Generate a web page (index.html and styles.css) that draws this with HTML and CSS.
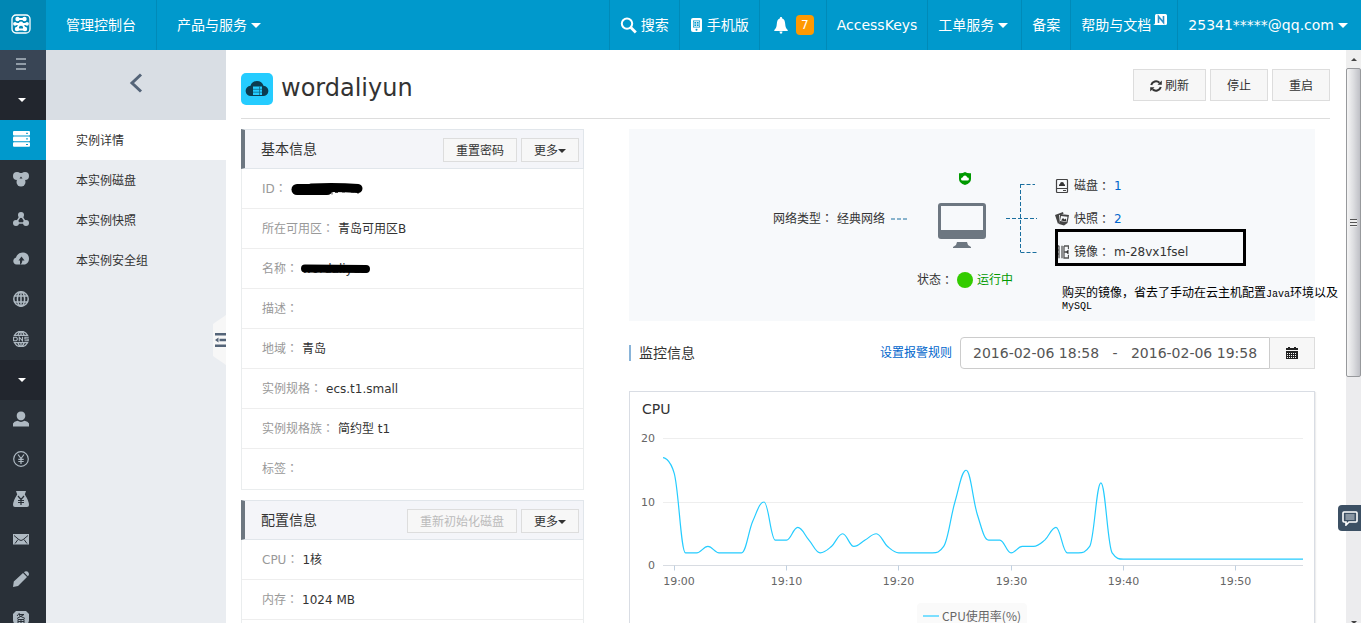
FILE: index.html
```html
<!DOCTYPE html>
<html lang="zh-CN">
<head>
<meta charset="utf-8">
<title>wordaliyun - 管理控制台</title>
<link rel="stylesheet" href="styles.css">
</head>
<body>
<header class="topbar">
  <a class="logo" href="#" aria-label="首页">
    <svg width="20" height="20" viewBox="0 0 20 20" fill="none" stroke="#fff"><rect x="1" y="1" width="18" height="18" rx="4" stroke-width="1.3"/><path d="M6.500 5h7M4 10h12M8.500 10l-2.500 5M11.500 10l2.500 5M6 15.500h8" stroke-width="2"/><g fill="#fff" stroke="none"><circle cx="6.500" cy="5" r="2.200"/><circle cx="13.500" cy="5" r="2.200"/><circle cx="4" cy="9.800" r="1.900"/><circle cx="10" cy="9.800" r="2.200"/><circle cx="16" cy="9.800" r="1.900"/><circle cx="6" cy="15" r="2.200"/><circle cx="14" cy="15" r="2.200"/></g></svg>
  </a>
  <a class="nav-item wide" href="#">管理控制台</a>
  <a class="nav-item wide divided" href="#">产品与服务<i class="caret"></i></a>
  <nav class="nav-right">
    <a class="nav-item divided" href="#"><svg width="17" height="17" viewBox="0 0 17 17" fill="none" stroke="#fff"><circle cx="7" cy="6.6" r="5.2" stroke-width="2"/><path d="M10.8 10.5l5 5" stroke-width="2.8"/></svg><span class="gap">搜索</span></a>
    <a class="nav-item divided" href="#"><svg width="13" height="16" viewBox="0 0 13 16"><rect x="1" y="1" width="11" height="14" rx="2" fill="#fff"/><path d="M3 3.500h7v7H3z" fill="#0099cc"/><path d="M4 4.500h5v5H4zM4 7h5M6.500 4.500v5" fill="none" stroke="#bfe5f2"/><circle cx="6.500" cy="12.800" r="1" fill="#0099cc"/></svg><span class="gap">手机版</span></a>
    <a class="nav-item divided bell" href="#" aria-label="消息"><svg width="14" height="17" viewBox="0 0 14 17" fill="#fff"><path d="M7 0c1 0 1.200.7 1.200 1.500C10.500 2.300 11 4.500 11.200 7c.2 3 .8 4.500 2.500 6v1H.3v-1C2 11.500 2.600 10 2.800 7 3 4.500 3.500 2.300 5.800 1.500 5.800.7 6 0 7 0zM5.500 14.500h3L8 16.500H6z"/></svg><span class="badge">7</span></a>
    <a class="nav-item divided" href="#">AccessKeys</a>
    <a class="nav-item divided" href="#">工单服务<i class="caret"></i></a>
    <a class="nav-item divided" href="#">备案</a>
    <a class="nav-item divided" href="#">帮助与文档<svg class="new" width="14" height="12" viewBox="0 0 14 12"><path d="M2 1.500Q2 0 3.500 0h9Q14 0 14 1.500v8q0 1.500-1.500 1.500H0q2-.5 2-2z" fill="#fff"/><path d="M5.500 9V2.500l5 6V2" fill="none" stroke="#2a8fc7" stroke-width="1.600"/></svg></a>
    <a class="nav-item divided" href="#">25341*****@qq.com<i class="caret"></i></a>
  </nav>
</header>
<div class="body">
  <nav class="rail">
    <button class="rail-toggle" aria-label="菜单"><svg width="10" height="12" viewBox="0 0 10 12" stroke="#aeb9c2" fill="none"><path d="M0 1h10M0 6h10M0 11h10" stroke-width="1.400"/></svg></button>
    <button class="rail-item dark" aria-label="产品"><i class="caret small"></i></button>
    <a class="rail-item active" href="#" aria-label="云服务器"><svg viewBox="0 0 17 16" width="17" height="16"><g fill="#fff"><rect width="17" height="4.600" rx="1"/><rect y="5.600" width="17" height="4.600" rx="1"/><rect y="11.200" width="17" height="4.600" rx="1"/></g><path d="M13 2.300h2M13 7.900h2M13 13.500h2" stroke="#0099cc"/></svg></a>
    <a class="rail-item" href="#" aria-label="数据库"><svg viewBox="0 0 16 16"><g fill="#aeb9c2"><circle cx="4" cy="5" r="4"/><circle cx="12" cy="5" r="4"/><circle cx="8" cy="11" r="4.500"/><path d="M4 2h8l-2 8H6z"/></g><path d="M8 5.500l1.500 2h-3z" fill="#293038"/></svg></a>
    <a class="rail-item" href="#" aria-label="负载均衡"><svg viewBox="0 0 16 16"><path d="M8 4L3 12h10z" fill="none" stroke="#aeb9c2" stroke-width="1.500"/><g fill="#aeb9c2"><circle cx="8" cy="4" r="3"/><circle cx="3" cy="12" r="3"/><circle cx="13" cy="12" r="3"/></g></svg></a>
    <a class="rail-item" href="#" aria-label="对象存储"><svg viewBox="0 0 16 16"><path d="M3.500 13.500A3.500 3.500 0 0 1 3 6.600C4 3 7 1.500 10 1.500c3.500 0 6 2.500 6 6s-2 6-5 6z" fill="#aeb9c2"/><path d="M8.500 5.500l3 4H9.300c0 2-.7 3-2.300 4.500V9.500H5.500z" fill="#293038"/></svg></a>
    <a class="rail-item" href="#" aria-label="CDN"><svg viewBox="0 0 16 16" fill="none" stroke="#aeb9c2" stroke-width="1.500"><circle cx="8" cy="8" r="7.200"/><ellipse cx="8" cy="8" rx="3.600" ry="7.200"/><path d="M8 1v14M1.500 5h13M1.500 11h13"/></svg></a>
    <a class="rail-item" href="#" aria-label="域名解析"><svg viewBox="0 0 16 16" fill="none" stroke="#aeb9c2" stroke-width="1.300"><path d="M1.500 4.300a7.300 7.300 0 0 1 13 0zM1.500 11.700a7.300 7.300 0 0 0 13 0zM8 1v3M8 12v3M5 4Q5.500 2 7 1M11 4Q10.500 2 9 1M5 12q.5 2 2 3M11 12q-.5 2-2 3"/><path stroke-width="1.100" d="M.6 6.200v3.600h2.600l1-1V7.200l-1-1zM6.300 10.300V6.200l3.200 3.600V5.700M15.800 6.200h-3.900V8h3.300v1.800h-3.700"/></svg></a>
    <button class="rail-item dark" aria-label="用户中心"><i class="caret small"></i></button>
    <a class="rail-item" href="#" aria-label="账号"><svg viewBox="0 0 16 16" fill="#aeb9c2"><path d="M8 .5c2.800 0 4.300 2 4.300 4.200C12.300 7 10.500 9.300 8 9.300S3.700 7 3.700 4.700C3.700 2.500 5.200.5 8 .5zM4.500 9.800Q8 12 11.500 9.800 15 10.500 16 12.500v3H0v-3Q1 10.500 4.500 9.800z"/></svg></a>
    <a class="rail-item" href="#" aria-label="费用"><svg viewBox="0 0 16 16" fill="none" stroke="#aeb9c2" stroke-width="1.200"><circle cx="8" cy="8" r="7.300"/><path d="M5 3.500l3 4 3-4M8 7.500v5.500M5.300 8.300h5.400M5.300 10.500h5.400"/></svg></a>
    <a class="rail-item" href="#" aria-label="续费"><svg viewBox="0 0 16 16"><path d="M3 0h10L11.800 3.500Q16 10 16 14q0 2-2 2H2q-2 0-2-2Q0 10 4.200 3.500z" fill="#aeb9c2"/><path d="M5 5l3 3.500L11 5M8 8.500V14M5 9.500h6M5 11.500h6" fill="none" stroke="#293038" stroke-width="1.200"/></svg></a>
    <a class="rail-item" href="#" aria-label="消息中心"><svg viewBox="0 0 16 16"><path d="M0 3h16v10.500H0z" fill="#aeb9c2"/><path d="M1 4.500l5 4.200q2 1.600 4 0l5-4.200M2 12.500L5 8.500M14 12.500l-3-4" fill="none" stroke="#293038" stroke-width="1"/></svg></a>
    <a class="rail-item" href="#" aria-label="工单"><svg viewBox="0 0 16 16" fill="#aeb9c2"><path d="M0 16l.8-5.500L10 2l4 4L5 15zM11 1.200Q12.500-.5 14.500.6 17 2.500 15.300 4.800L14.800 5.300z"/></svg></a>
    <a class="rail-item" href="#" aria-label="备案"><svg viewBox="0 0 16 16"><path d="M3 0h10l3 3v6q0 5-8 7-8-2-8-7V3z" fill="#aeb9c2"/><path d="M6.500 2L4 5M6 3.500h5L4 7.500M6 4.500l6 3M5 8.500h6v4H5zM8 8.500v4M5 10.500h6" fill="none" stroke="#293038"/></svg></a>
  </nav>
  <aside class="submenu">
    <button class="back" aria-label="返回"><svg width="14" height="20" viewBox="0 0 14 20" fill="none" stroke="#546478" stroke-width="3"><path d="M12 1.500L3 10l9 8.500"/></svg></button>
    <a class="sub-link current" href="#">实例详情</a>
    <a class="sub-link" href="#">本实例磁盘</a>
    <a class="sub-link" href="#">本实例快照</a>
    <a class="sub-link" href="#">本实例安全组</a>
    <button class="fold" aria-label="收起"><svg width="11" height="14" viewBox="0 0 11 14" stroke="#546478" fill="none"><path d="M0 1.300h11M4.500 7H11M0 12.700h11" stroke-width="2.400"/><path d="M3.500 4.500L0 7l3.500 2.500z" fill="#546478" stroke="none"/></svg></button>
  </aside>
  <main class="main">
    <div class="page-head">
      <svg width="32" height="32" viewBox="0 0 32 32"><rect width="32" height="32" rx="5" fill="#25ccff"/><path d="M10 23a5 5 0 0 1-.5-10.200Q11 8 16 8t6.500 4.800A5 5 0 0 1 22 23z" fill="#0c3c50"/><path d="M12 13.500h9v8.500h-9z" fill="#25ccff"/><path d="M12 16.300h9M12 19.200h9M18.500 13.500V22" stroke="#0c6f8e" stroke-width=".8"/></svg>
      <h1>wordaliyun</h1>
      <div class="actions">
        <button class="btn"><svg width="12" height="12" viewBox="0 0 12 12" fill="none" stroke="#333" stroke-width="2"><path d="M1.200 5A5 5 0 0 1 9.500 2.800M10.800 7A5 5 0 0 1 2.500 9.200"/><path d="M11.800.5v4.300H7.500zM.2 11.500V7.200h4.300z" fill="#333" stroke="none"/></svg>刷新</button>
        <button class="btn">停止</button>
        <button class="btn">重启</button>
      </div>
    </div>
    <div class="columns">
      <div class="left">
        <section class="card">
          <div class="card-head"><h2>基本信息</h2><button class="btn mini">重置密码</button><button class="btn mini">更多<i class="caret small"></i></button></div>
          <dl>
            <div class="row"><dt>ID<span class="colon">：</span></dt><dd><svg class="mark-id" width="74" height="14" viewBox="0 0 74 14"><path d="M41 12.500V8M44 10.500h3M51 10h3M60 10h3M67 6v6" stroke="#444"/><path d="M6 7.500h30" stroke="#000" stroke-width="11" stroke-linecap="round"/><path d="M20 6Q46 5 67 6.500" fill="none" stroke="#000" stroke-width="9" stroke-linecap="round"/></svg></dd></div>
            <div class="row"><dt>所在可用区<span class="colon">：</span></dt><dd>青岛可用区B</dd></div>
            <div class="row"><dt>名称<span class="colon">：</span></dt><dd class="masked">wordaliyun<svg class="mark-name" width="70" height="10" viewBox="0 0 70 10"><path d="M4 4.500L65 5" fill="none" stroke="#000" stroke-width="8" stroke-linecap="round"/></svg></dd></div>
            <div class="row"><dt>描述<span class="colon">：</span></dt><dd></dd></div>
            <div class="row"><dt>地域<span class="colon">：</span></dt><dd>青岛</dd></div>
            <div class="row"><dt>实例规格<span class="colon">：</span></dt><dd>ecs.t1.small</dd></div>
            <div class="row"><dt>实例规格族<span class="colon">：</span></dt><dd>简约型 t1</dd></div>
            <div class="row"><dt>标签<span class="colon">：</span></dt><dd></dd></div>
          </dl>
        </section>
        <section class="card">
          <div class="card-head"><h2>配置信息</h2><button class="btn mini" disabled>重新初始化磁盘</button><button class="btn mini">更多<i class="caret small"></i></button></div>
          <dl>
            <div class="row"><dt>CPU<span class="colon">：</span></dt><dd>1核</dd></div>
            <div class="row"><dt>内存<span class="colon">：</span></dt><dd>1024 MB</dd></div>
            <div class="row"></div>
          </dl>
        </section>
      </div>
      <div class="right">
        <section class="topology">
          <div class="net"><span>网络类型<span class="colon">：</span> 经典网络</span><svg width="16" height="2" viewBox="0 0 16 2"><path d="M0 1h16" stroke="#1a6f9f" stroke-dasharray="4 2"/></svg></div>
          <div class="host">
            <svg width="12" height="13" viewBox="0 0 12 13"><path d="M6 0Q8.500 1.500 12 1.200V7q0 4-6 6-6-2-6-6V1.200Q3.500 1.500 6 0z" fill="#090"/><path d="M3.500 8.500a1.500 1.500 0 0 1 0-3Q4.500 3.500 6 3.500t2.300 2a1.500 1.500 0 0 1 .2 3z" fill="#fff"/></svg>
            <svg class="monitor" width="48" height="46" viewBox="0 0 48 46"><path d="M3 0h42q3 0 3 3v30q0 3-3 3H3q-3 0-3-3V3q0-3 3-3z" fill="#6d7781"/><path d="M3 3h42v24H3z" fill="#f7f9fb"/><path d="M19 39h10l1 3 3 2v1H15v-1l3-2z" fill="#6d7781"/></svg>
            <div class="state">状态<span class="colon">：</span><i class="dot"></i><span class="ok">运行中</span></div>
          </div>
          <svg class="bracket" width="31" height="70" viewBox="0 0 31 70"><path d="M0 35.500h31M14.500 1v68M14.500 1.500H29M14.500 69.500H31" fill="none" stroke="#1a6f9f" stroke-dasharray="4 2"/></svg>
          <ul class="assets">
            <li><svg viewBox="0 0 14 14" fill="none" stroke="#444"><rect x="1.500" y=".5" width="11" height="13" rx="1" stroke-width="1.200"/><path d="M1.500 9.500h11M8 11.500h3"/><path d="M4 7Q3.500 5.500 5 5q0-2 2-2t2 2q1.500.5 1 2z" fill="#333" stroke="none"/></svg>磁盘<span class="colon">：</span><a href="#">1</a></li>
            <li><svg viewBox="0 0 14 14"><path d="M0 3l8-3 .5 2L4 3v8l-1 1zM5 2l9 1-1.500 8L9 13.500 4 12z" fill="#444"/><path d="M6 4l6.500.8-1 5.200-6.500-1z" fill="#f7f9fb"/><path d="M6 8.500l2-2.500 1.500 1.500 1.500-1 .3 3z" fill="#333"/></svg>快照<span class="colon">：</span><a href="#">2</a></li>
            <li class="image-row"><svg viewBox="0 0 14 14" fill="none" stroke="#555" stroke-width="1.300"><path d="M.7 0v13.500M4 .7v12.600M7 .7v12.600M1 1h3M1 5h3M1 9h3M9 1h4.500v3M9 1v12h4.500v-3M9 7h2"/><path d="M13.500 4.500L10.500 7l3 2.500z" fill="#333" stroke="none"/></svg>镜像<span class="colon">：</span><span class="img-id">m-28vx1fsel</span><i class="frame"></i><p class="note">购买的镜像，省去了手动在云主机配置<span class="latin">Java</span>环境以及<br><span class="latin">MySQL</span></p></li>
          </ul>
        </section>
        <div class="monitor-head">
          <h2>监控信息</h2>
          <a class="rule" href="#">设置报警规则</a>
          <input class="range" type="text" aria-label="时间范围" value="2016-02-06 18:58&nbsp;&nbsp;&nbsp;-&nbsp;&nbsp;&nbsp;2016-02-06 19:58">
          <button class="cal" aria-label="日历"><svg width="12" height="12" viewBox="0 0 12 12"><path d="M0 1h2V0h2v1h4V0h2v1h2v2H0zM0 4h12v8H0z" fill="#222"/><path d="M1 6.500h10M1 8.500h10M1 10.500h10" stroke="#f7f7f7" stroke-dasharray="1 1"/></svg></button>
        </div>
        <section class="chart-card">
          <h3>CPU</h3>
          <svg class="chart" id="cpu" role="img" aria-label="CPU使用率"></svg>
          <div class="legend"><i class="key"></i>CPU使用率(%)</div>
        </section>
      </div>
    </div>
  </main>
  <div class="scroller" aria-hidden="true"><div class="arrow"><i class="up"></i></div><div class="thumb"><i class="grip"></i></div><i class="down"></i></div>
</div>
<button class="chat" aria-label="咨询"><svg width="16" height="15" viewBox="0 0 16 15"><path d="M2 1h12q1 0 1 1v8q0 1-1 1H7l-3 3v-3H2q-1 0-1-1V2q0-1 1-1z" fill="#3c5064" stroke="#fff" stroke-width="1.600"/><path d="M3.500 4h9M3.500 6h9M3.500 8h9" stroke="#d5dbe1"/></svg></button>
<script src="chart.js"></script>
</body>
</html>
```
FILE: styles.css
```css
* { box-sizing: border-box; }
body {
  margin: 0;
  height: 100vh;
  display: flex;
  flex-direction: column;
  overflow: hidden;
  background: #fff;
  color: #333;
  font: 12px/20px "DejaVu Sans", "Noto Sans CJK SC", sans-serif;
}
a { color: inherit; text-decoration: none; }
button { margin: 0; padding: 0; border: 0; background: none; color: inherit; font: inherit; }
h1, h2, h3, dl, dd, ul, p { margin: 0; padding: 0; font-weight: normal; }
ul { list-style: none; }
svg { flex: none; }

.caret { flex: none; border: 5px solid transparent; border-top-color: currentColor; border-bottom: 0; }
.caret.small { border-width: 4px 4px 0; }
.colon { display: inline-block; font-family: "Noto Sans CJK TC", sans-serif; line-height: 1; }

.topbar { flex: none; display: flex; height: 50px; background: #0099cc; color: #fff; font-size: 14px; }
.logo { display: flex; align-items: center; justify-content: center; width: 46px; padding: 0 4px 2px 0; background: #0087b4; }
.nav-item { display: flex; align-items: center; padding: 0 10px; white-space: nowrap; }
.nav-item.wide { padding: 0 20px; }
.nav-item .caret { margin-left: 4px; }
.nav-right .caret { margin-right: 3px; }
.nav-item .gap { margin-left: 4px; }
.divided { border-left: 1px solid #008ab8; }
.nav-right { display: flex; margin-left: auto; }
.nav-item.bell { padding: 0 12px 0 14px; }
.badge { margin-left: 8px; width: 18px; height: 20px; border-radius: 4px; background: #ff9900; font-size: 12px; text-align: center; }
.new { align-self: flex-start; margin: 14px 0 0 2px; }

.body { flex: 1; min-height: 0; display: flex; }
.rail { flex: none; display: flex; flex-direction: column; width: 46px; overflow: hidden; background: #293038; }
.rail-toggle, .rail-item { flex: none; display: flex; align-items: center; justify-content: center; padding: 0 4px 2px 0; }
.rail-toggle { height: 30px; background: #394555; }
.rail-item { height: 40px; }
.rail-item svg { height: 16px; }
.rail-item.dark { padding: 0 2px 0 0; background: #22262e; color: #fff; }
.rail-item.active { background: #0099cc; }

.submenu { flex: none; position: relative; display: flex; flex-direction: column; width: 180px; background: #eaedf1; }
.back { height: 70px; padding-bottom: 4px; background: #d9dee4; }
.back svg { display: block; margin: 0 auto; }
.sub-link { height: 40px; padding: 1px 0 0 30px; line-height: 40px; }
.current { background: #fff; }
.fold { position: absolute; right: 0; top: 265px; width: 13px; height: 50px; padding-left: 2px; background: #f7f7f7; clip-path: polygon(0 18%, 100% 0, 100% 100%, 0 82%); }
.fold svg { display: block; }

.main { flex: 1; min-width: 0; overflow: hidden; padding: 0 15px; }
.page-head { display: flex; align-items: center; height: 69px; padding-top: 2px; border-bottom: 1px solid #ddd; }
.page-head svg { margin-top: 8px; }
.page-head h1 { margin: 6px 0 0 8px; font-size: 24px; line-height: 32px; }
.actions { display: flex; gap: 4px; margin-left: auto; }
.btn { display: flex; align-items: center; height: 32px; padding: 1px 16px 0; border: 1px solid #ddd; background: #f7f7f7; }
.page-head .btn svg { margin: 0 3px 0 0; }
.btn.mini { height: 24px; padding: 1px 12px 0; margin-top: 2px; }
.btn:disabled { color: #bbb; }

.columns { display: grid; grid-template-columns: 1fr 2fr; gap: 45px; padding: 10px 15px 0 0; }
.left, .right { min-width: 0; }
.card { margin-bottom: 10px; border: 1px solid #eaedee; }
.card-head { display: flex; align-items: center; gap: 4px; height: 40px; margin: -1px; padding: 0 4px 0 16px; border: 1px solid #e1e6eb; border-left: 4px solid #6d7781; background: #f4f5f9; }
.card-head h2 { margin-right: auto; font-size: 14px; }
.row { display: flex; gap: 4px; height: 40px; padding: 10px 20px; border-bottom: 1px solid #eee; }
.row:last-child { border-bottom: 0; }
.card-head + dl { padding-top: 1px; }
dt { color: #999; }
.mark-id { display: block; margin-top: 3px; }
.masked { position: relative; }
.mark-name { position: absolute; left: -1px; top: 5px; }

.topology { display: flex; height: 192px; padding-left: 21%; background: #f7f9fb; white-space: nowrap; }
.net { display: flex; align-items: center; align-self: flex-start; gap: 6px; padding-top: 80px; }
.host { display: flex; flex-direction: column; align-items: center; width: 96px; margin-left: 10px; padding-top: 43px; }
.monitor { margin: 18px 6px 21px 0; }
.state { display: flex; align-items: center; }
.dot { width: 16px; height: 16px; margin-left: 4px; border-radius: 50%; background: #33cc00; }
.ok { margin-left: 4px; color: #090; }
.bracket { margin: 54px 0 0 -7px; }
.assets { display: flex; flex-direction: column; gap: 13px; margin: 47px 0 0 18px; }
.assets li { display: flex; align-items: center; }
.assets svg { width: 14px; height: 14px; margin-right: 5px; }
.assets a { margin-left: 4px; color: #0066cc; }
.img-id { margin-left: 4px; }
.image-row { position: relative; }
.frame { position: absolute; left: 0; top: -13px; width: 191px; height: 37px; border: 3px solid #000; }
.note { position: absolute; left: 7px; top: 45px; color: #000; font-size: 12px; line-height: 12px; }
.latin { font-family: "Liberation Mono", monospace; font-size: 10px; line-height: 8px; }

.monitor-head { display: flex; align-items: center; height: 32px; margin-top: 16px; }
.monitor-head h2 { margin-right: auto; padding-left: 8px; border-left: 2px solid #89b4d9; font-size: 14px; line-height: 16px; }
.rule { margin-right: 8px; color: #0066cc; }
.range { width: 310px; height: 32px; padding: 0 12px; border: 1px solid #ccc; border-radius: 4px 0 0 4px; background: #fff; color: #555; font: 14px/20px "DejaVu Sans", sans-serif; }
.cal { display: flex; align-items: center; justify-content: center; width: 45px; height: 32px; border: 1px solid #ddd; border-left: 0; background: #f7f7f7; }

.chart-card { margin-top: 22px; padding: 7px 11px 12px; border: 1px solid #d9dde4; box-shadow: 1px 1px 1px #eee; }
.chart-card h3 { padding-left: 1px; font-size: 14px; line-height: 20px; }
.chart { display: block; width: 100%; height: 178px; }
.chart text { fill: #666; font-size: 11px; }
.grid-line { stroke: #eee; }
.axis-line { stroke: #d8dce2; }
.tick { stroke: #c0d0e0; }
.series { fill: none; stroke: #25ccff; stroke-width: 1.2px; }
.legend { display: flex; align-items: center; width: max-content; margin: 6px auto 0; padding: 3px 6px 6px; border-radius: 4px; background: #fafafa; color: #666; font-family: "Noto Sans CJK SC", sans-serif; }
.key { width: 16px; height: 2px; margin-right: 3px; background: #7cdfff; }

.scroller { flex: none; display: flex; flex-direction: column; position: relative; width: 15px; margin-left: 1px; background: #ececee; }
.arrow { display: flex; align-items: center; justify-content: center; height: 18px; background: #efefef; }
.up { border: 3px solid transparent; border-top: 0; border-bottom-color: #444; }
.thumb { display: flex; align-items: center; justify-content: center; height: 54%; border: 1px solid #97999c; border-radius: 2px; background: linear-gradient(90deg, #f5f5f5, #dcdde0 50%, #bfc0c6); }
.grip { width: 7px; height: 8px; background: repeating-linear-gradient(#555 0 1px, #eee 1px 3px); }
.down { position: absolute; left: 5px; bottom: -1px; border: 3px solid transparent; border-top-color: #444; border-bottom: 0; }
.chat { position: absolute; right: 0; top: 505px; display: flex; align-items: center; justify-content: center; width: 23px; height: 26px; border-radius: 4px 0 0 4px; background: #3c5064; }
```
FILE: chart.js
```js
(function () {
  var svg = document.getElementById('cpu');
  var NS = 'http://www.w3.org/2000/svg';
  // One sample a minute, from 18:59
  var data = [17, 14.5, 2, 2, 3, 2, 2, 2, 7, 10, 4, 4, 6, 4, 2, 3, 5, 3, 4, 5, 3, 2, 2, 2, 2, 3, 10, 15, 8, 4, 4, 2, 3, 3, 4, 6, 2, 2, 3, 13, 2];
  while (data.length < 58) data.push(1);

  function add(name, attrs, text) {
    var el = document.createElementNS(NS, name);
    Object.keys(attrs).forEach(function (k) { el.setAttribute(k, attrs[k]); });
    if (text) el.textContent = text;
    svg.appendChild(el);
  }

  // Smooth curve that never overshoots a local extreme
  function spline(p) {
    var d = 'M' + p[0].x + ' ' + p[0].y;
    var prev = p[0];
    for (var i = 1; i < p.length; i++) {
      var a = p[i - 1], b = p[i], c = p[i + 1];
      var left = b, right = b;
      if (c) {
        left = { x: (1.5 * b.x + a.x) / 2.5, y: (1.5 * b.y + a.y) / 2.5 };
        right = { x: (1.5 * b.x + c.x) / 2.5, y: (1.5 * b.y + c.y) / 2.5 };
        var k = (right.y - left.y) * (right.x - b.x) / (right.x - left.x) + b.y - right.y;
        left.y += k;
        right.y += k;
        var lo = Math.min(a.y, b.y), hi = Math.max(a.y, b.y);
        if (left.y > hi || left.y < lo) {
          left.y = left.y > hi ? hi : lo;
          right.y = 2 * b.y - left.y;
        }
        lo = Math.min(c.y, b.y);
        hi = Math.max(c.y, b.y);
        if (right.y > hi || right.y < lo) {
          right.y = right.y > hi ? hi : lo;
          left.y = 2 * b.y - right.y;
        }
      }
      d += 'C' + [prev.x, prev.y, left.x, left.y, b.x, b.y].join(' ');
      prev = right;
    }
    return d;
  }

  function draw() {
    svg.textContent = '';
    var x0 = 22, x1 = svg.clientWidth, base = 146.5, unit = 6.35;
    var step = (x1 - x0) / (data.length - 1);
    [20, 10, 0].forEach(function (v) {
      var y = Math.floor(base - v * unit) + 0.5;
      add('line', { x1: x0, x2: x1, y1: y, y2: y, class: v ? 'grid-line' : 'axis-line' });
      add('text', { x: 14, y: y + 3, 'text-anchor': 'end' }, String(v));
    });
    for (var m = 0; m < 60; m += 10) {
      var x = Math.floor(x0 + (m + 1) * step) + 0.5;
      if (x > x1) break;
      add('line', { x1: x, x2: x, y1: base, y2: base + 5, class: 'tick' });
      add('text', { x: Math.max(x, x0 + 16), y: base + 19, 'text-anchor': 'middle' }, '19:' + (m || '00'));
    }
    add('path', { class: 'series', d: spline(data.map(function (v, i) {
      return { x: x0 + i * step, y: base - v * unit };
    })) });
  }

  draw();
  window.addEventListener('resize', draw);
})();
```
